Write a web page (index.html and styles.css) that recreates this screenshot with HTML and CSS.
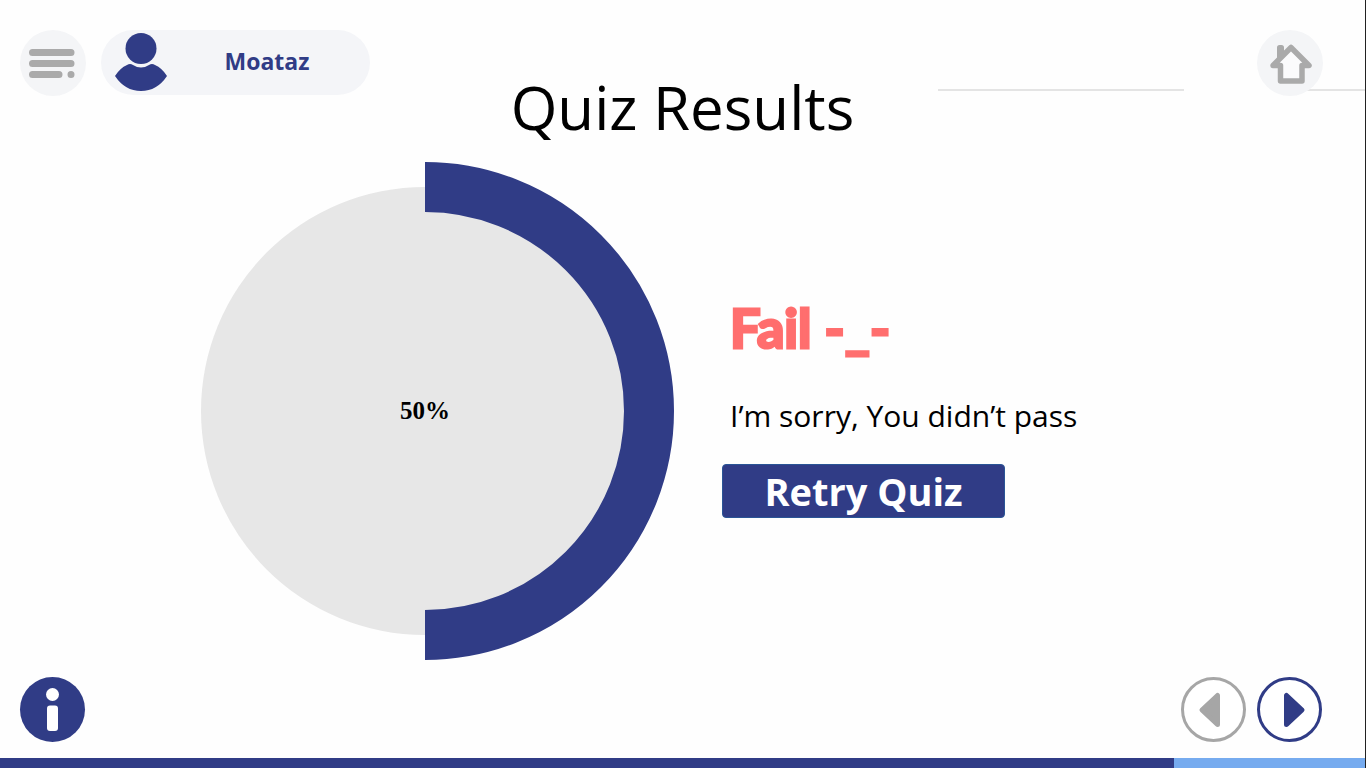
FILE: index.html
```html
<!DOCTYPE html>
<html lang="en">
<head>
<meta charset="utf-8">
<title>Quiz Results</title>
<meta name="viewport" content="width=device-width, initial-scale=1">
<link rel="stylesheet" href="styles.css">
</head>
<body>

<header class="header">
  <div class="header-left">
    <button class="round" type="button" aria-label="Menu">
      <svg width="66" height="66" viewBox="0 0 66 66">
        <g stroke="#aaa" stroke-width="7" stroke-linecap="round">
          <path d="M12.500 22.500h38.500M12.500 33.500h38.500M12.500 44.500h26.500M51 44.500h.01"/>
        </g>
      </svg>
    </button>
    <div class="user">
      <svg width="54" height="60" viewBox="0 0 54 60">
        <circle cx="27" cy="15.500" r="15.500"/>
        <path d="M13 32Q16 30 19 32Q27 37 35 32Q38 30 41 32Q48 35 53 43Q43 58 27 58Q11 58 1 43Q6 35 13 32z"/>
      </svg>
      <span class="user-name">Moataz</span>
    </div>
  </div>
  <h1 class="title">Quiz Results</h1>
  <div class="header-right">
    <span class="line"></span>
    <a class="round" href="#home" aria-label="Home">
      <svg width="66" height="66" viewBox="0 0 66 66">
        <path d="M22.500 28V17.500h2v7" fill="none" stroke="#aaa" stroke-width="5" stroke-linejoin="round" stroke-linecap="round"/>
        <path d="M34 17.500L52 35.500H45V51H23.500V35.500H16z" fill="#fbfbfc" stroke="#aaa" stroke-width="5.500" stroke-linejoin="round"/>
      </svg>
    </a>
    <span class="line line-end"></span>
  </div>
</header>

<main class="main">
  <svg class="chart" viewBox="0 0 473 498" role="img" aria-label="Score 50%">
    <circle cx="224" cy="249" r="224" fill="#e7e7e7"/>
    <path d="M224 25a224 224 0 0 1 0 448" fill="none" stroke="#303c86" stroke-width="50"/>
    <text class="percent" x="224" y="257" text-anchor="middle">50%</text>
  </svg>
  <section class="result">
    <h2 class="status">Fail -_-</h2>
    <p class="message">I’m sorry, You didn’t pass</p>
    <button class="retry" type="button">Retry Quiz</button>
  </section>
</main>

<footer class="footer">
  <button class="round info" type="button" aria-label="Information">
    <svg width="65" height="65" viewBox="0 0 65 65" fill="#fff">
      <circle cx="32.500" cy="17.500" r="6.500"/>
      <rect x="27" y="28.500" width="11" height="25.500" rx="3"/>
    </svg>
  </button>
  <nav class="pager">
    <button class="page prev" type="button" aria-label="Previous">
      <svg width="58" height="58" viewBox="0 0 58 58">
        <path d="M17 29L32.500 14.500V43.500z"/>
      </svg>
    </button>
    <button class="page next" type="button" aria-label="Next">
      <svg width="58" height="58" viewBox="0 0 58 58">
        <path d="M41 29L25.500 14.500V43.500z"/>
      </svg>
    </button>
  </nav>
</footer>
<progress class="progress" value="86" max="100" aria-label="Course progress"></progress>

</body>
</html>
```

FILE: styles.css
```css
* { box-sizing: border-box; }

body {
  margin: 0;
  min-height: 100vh;
  display: flex;
  flex-direction: column;
  border-right: 1px solid #222;
  background: #fefefe;
  color: #000;
  font-family: "Open Sans", sans-serif;
}

button { border: 0; padding: 0; font: inherit; cursor: pointer; }
svg { display: block; }

/* header */
.header {
  display: grid;
  grid-template-columns: 1fr auto 1fr;
  align-items: start;
  padding-top: 30px;
}
.header-left { display: flex; gap: 15px; padding-left: 20px; }
.round {
  flex: none;
  width: 66px;
  height: 66px;
  border-radius: 50%;
  background: #f4f5f7;
}
.user {
  display: flex;
  align-items: center;
  width: 269px;
  height: 65px;
  padding-left: 13px;
  border-radius: 33px;
  background: #f4f5f8;
  fill: #303c86;
}
.user-name {
  flex: 1;
  padding: 0 4px 4px 0;
  text-align: center;
  font-size: 23px;
  font-weight: bold;
  color: #303c86;
}
.title {
  margin: 36px 0 0;
  font-size: 60px;
  font-weight: normal;
  line-height: 82px;
}
.header-right { display: flex; align-items: flex-end; padding-left: 84px; }
.header-right .round { position: relative; z-index: 1; margin-left: 73px; }
.line { flex: 1; height: 2px; margin-bottom: 5px; background: #e4e4e4; }
.line-end { flex: none; width: 60px; margin-left: -18px; }

/* score and result */
.main {
  flex: 1;
  display: flex;
  align-items: flex-start;
  gap: 48px;
  padding: 14px 20px 0 201px;
}
.chart { flex: 0 1 473px; }
.percent { font: bold 25px "Liberation Serif", serif; }
.result { align-self: center; padding-bottom: 30px; }
.status {
  margin: 0 0 32px;
  padding-left: 8px;
  font-family: Lato, sans-serif;
  font-size: 54px;
  font-weight: bold;
  line-height: 72px;
  color: #ff6e6e;
  -webkit-text-stroke: 3px #ff6e6e;
}
.message {
  margin: 0 0 28px;
  padding-left: 8px;
  font-size: 30px;
  line-height: 40px;
}
.retry {
  width: 283px;
  height: 54px;
  border: 1px solid #2a5596;
  border-radius: 4px;
  background: #303c86;
  color: #fff;
  font-size: 38px;
  font-weight: bold;
  line-height: 52px;
}

/* footer */
.footer {
  display: flex;
  justify-content: space-between;
  padding: 0 43px 16px 20px;
}
.info { width: 65px; height: 65px; background: #303c86; }
.pager { display: flex; gap: 11px; }
.page {
  display: grid;
  place-items: center;
  width: 65px;
  height: 65px;
  border: 3px solid;
  border-radius: 50%;
  background: #fff;
}
.page path {
  fill: currentColor;
  stroke: currentColor;
  stroke-width: 5px;
  stroke-linejoin: round;
}
.prev { color: #a6a6a6; }
.next { color: #303c86; }

.progress {
  appearance: none;
  display: block;
  width: 100%;
  height: 10px;
  border: 0;
  background: #76abef;
}
.progress::-webkit-progress-bar { background: #76abef; }
.progress::-webkit-progress-value { background: #303c86; }
```
